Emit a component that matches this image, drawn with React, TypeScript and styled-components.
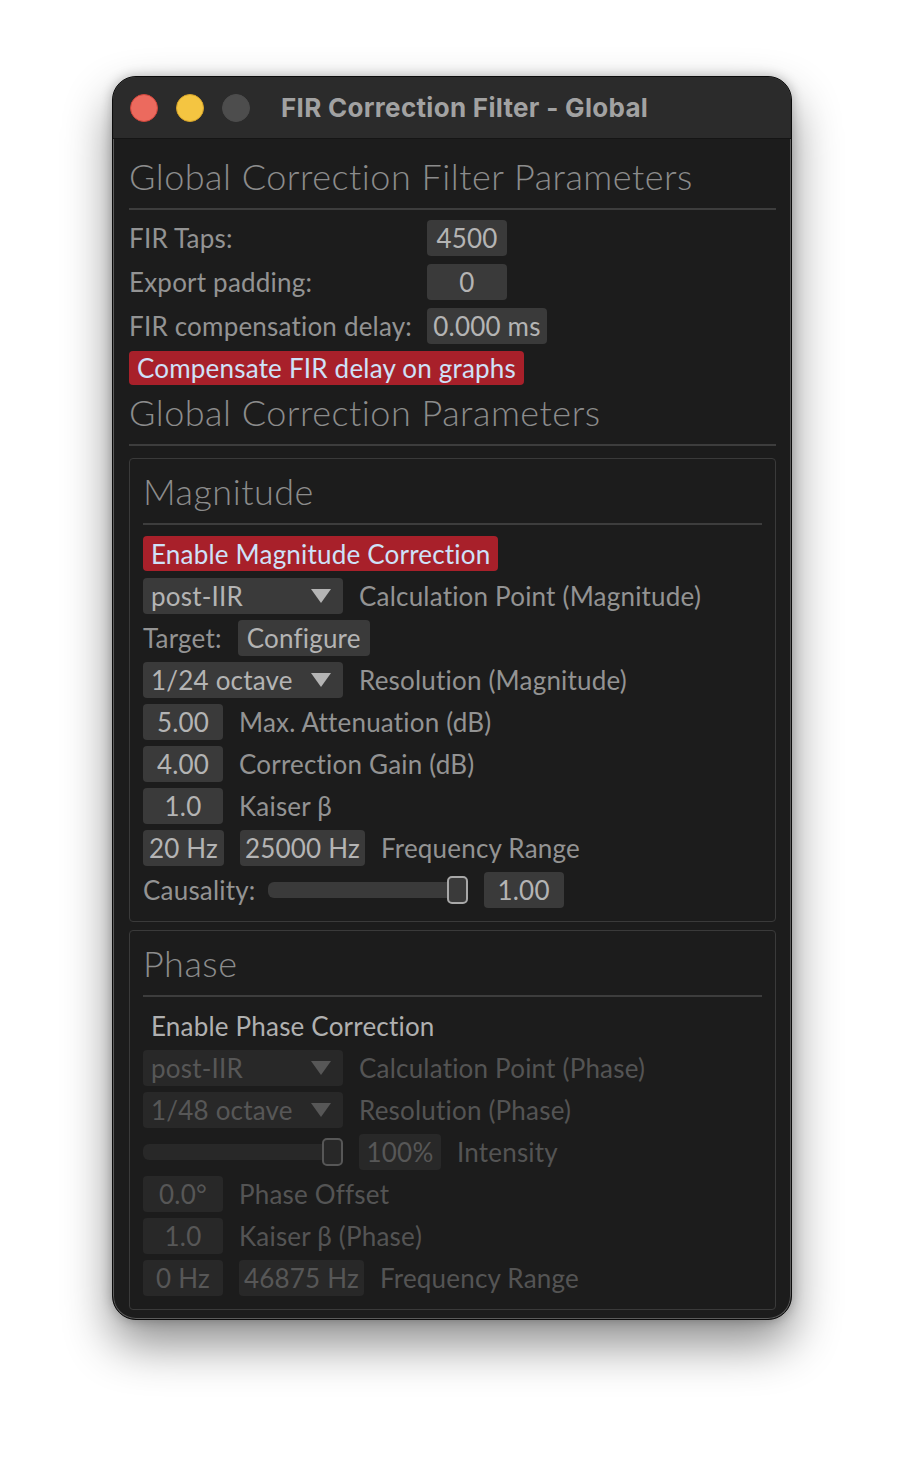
import React from "react";
import styled, { createGlobalStyle } from "styled-components";

const FONT = `"Lato", "Open Sans", "Noto Sans", sans-serif`;

const GlobalStyle = createGlobalStyle`
  html, body {
    margin: 0;
    padding: 0;
    background: #ffffff;
  }
  * {
    box-sizing: border-box;
  }
`;

const App = () => {
  return (
    <Page>
      <GlobalStyle />
      <Window>
        <TitleBar>
          <Light color="#ec6a5e" edge="#d0453b" />
          <Light color="#f4c541" edge="#d6a42a" />
          <Light color="#4d4d4d" edge="#4d4d4d" />
          <Title>FIR Correction Filter - Global</Title>
        </TitleBar>
        <Content>
          <Heading>Global Correction Filter Parameters</Heading>
          <Rule />
          <ParamGrid>
            <Label>FIR Taps:</Label>
            <Field width={80}>4500</Field>
            <Label>Export padding:</Label>
            <Field width={80}>0</Field>
            <Label>FIR compensation delay:</Label>
            <Field width={120}>0.000 ms</Field>
          </ParamGrid>
          <Toggle active>Compensate FIR delay on graphs</Toggle>
          <Heading spaced>Global Correction Parameters</Heading>
          <Rule />
          <Group>
            <Heading>Magnitude</Heading>
            <Rule />
            <Toggle active>Enable Magnitude Correction</Toggle>
            <Rows>
              <Row>
                <Select>
                  post-IIR
                  <Caret />
                </Select>
                <Label>Calculation Point (Magnitude)</Label>
              </Row>
              <Row>
                <Label>Target:</Label>
                <Button>Configure</Button>
              </Row>
              <Row>
                <Select>
                  1/24 octave
                  <Caret />
                </Select>
                <Label>Resolution (Magnitude)</Label>
              </Row>
              <Row>
                <Field width={80}>5.00</Field>
                <Label>Max. Attenuation (dB)</Label>
              </Row>
              <Row>
                <Field width={80}>4.00</Field>
                <Label>Correction Gain (dB)</Label>
              </Row>
              <Row>
                <Field width={80}>1.0</Field>
                <Label>Kaiser β</Label>
              </Row>
              <Row>
                <Field width={81}>20 Hz</Field>
                <Field width={125}>25000 Hz</Field>
                <Label>Frequency Range</Label>
              </Row>
              <Row gap={12}>
                <Label>Causality:</Label>
                <Slider width={200} trail={4}>
                  <Thumb />
                </Slider>
                <Field width={80}>1.00</Field>
              </Row>
            </Rows>
          </Group>
          <Group last>
            <Heading>Phase</Heading>
            <Rule />
            <Toggle>Enable Phase Correction</Toggle>
            <Rows>
              <Row>
                <Select disabled>
                  post-IIR
                  <Caret disabled />
                </Select>
                <Label disabled>Calculation Point (Phase)</Label>
              </Row>
              <Row>
                <Select disabled>
                  1/48 octave
                  <Caret disabled />
                </Select>
                <Label disabled>Resolution (Phase)</Label>
              </Row>
              <Row>
                <Slider width={200} disabled>
                  <Thumb disabled />
                </Slider>
                <Field width={82} disabled>
                  100%
                </Field>
                <Label disabled>Intensity</Label>
              </Row>
              <Row>
                <Field width={80} disabled>
                  0.0°
                </Field>
                <Label disabled>Phase Offset</Label>
              </Row>
              <Row>
                <Field width={80} disabled>
                  1.0
                </Field>
                <Label disabled>Kaiser β (Phase)</Label>
              </Row>
              <Row>
                <Field width={80} disabled>
                  0 Hz
                </Field>
                <Field width={125} disabled>
                  46875 Hz
                </Field>
                <Label disabled>Frequency Range</Label>
              </Row>
            </Rows>
          </Group>
        </Content>
      </Window>
    </Page>
  );
};

export default App;

const Page = styled.div`
  width: 904px;
  height: 1468px;
  padding: 76px 0 0 112px;
  background: #ffffff;
  font-family: ${FONT};
`;

const Window = styled.div`
  width: 680px;
  height: 1244px;
  border-radius: 24px;
  overflow: hidden;
  background: #1c1c1c;
  border: 1px solid #0c0c0c;
  box-shadow: inset 0 0 0 1px #5c5c5c, 0 24px 48px rgba(0, 0, 0, 0.45),
    0 0 12px rgba(0, 0, 0, 0.25);
  display: flex;
  flex-direction: column;
`;

const TitleBar = styled.div`
  height: 62px;
  flex-shrink: 0;
  background: #2b2b2b;
  display: flex;
  align-items: center;
  padding-left: 17px;
  gap: 18px;
  border-bottom: 1px solid #151515;
`;

const Light = styled.span<{ color: string; edge: string }>`
  width: 28px;
  height: 28px;
  border-radius: 50%;
  background: ${(p) => p.color};
  border: 1px solid ${(p) => p.edge};
`;

const Title = styled.div`
  margin-left: 13px;
  font-family: "Inter", "Liberation Sans", Arial, sans-serif;
  font-weight: 700;
  font-size: 26px;
  color: #a2a2a2;
  letter-spacing: 0.3px;
`;

const Content = styled.div`
  flex: 1;
  padding: 15px 15px 0 16px;
  display: flex;
  flex-direction: column;
`;

const Heading = styled.div<{ spaced?: boolean }>`
  height: 44px;
  margin-top: ${(p) => (p.spaced ? "5px" : "0")};
  line-height: 44px;
  font-size: 36px;
  font-weight: 300;
  letter-spacing: 0.5px;
  color: #8c8c8c;
  white-space: nowrap;
`;

const Rule = styled.div`
  height: 2px;
  margin-top: 10px;
  background: #3d3d3d;
`;

const ParamGrid = styled.div`
  margin-top: 10px;
  display: grid;
  grid-template-columns: 298px auto;
  row-gap: 8px;
  align-items: center;
  justify-items: start;
`;

const Label = styled.span<{ disabled?: boolean }>`
  font-size: 26px;
  letter-spacing: 0.2px;
  color: ${(p) => (p.disabled ? "#545454" : "#939393")};
  white-space: nowrap;
`;

const Field = styled.div<{ width: number; disabled?: boolean }>`
  width: ${(p) => p.width}px;
  height: 36px;
  border-radius: 4px;
  background: ${(p) => (p.disabled ? "#282828" : "#3a3a3a")};
  color: ${(p) => (p.disabled ? "#575757" : "#b4b4b4")};
  font-size: 26px;
  letter-spacing: 0.2px;
  display: flex;
  align-items: center;
  justify-content: center;
  white-space: nowrap;
`;

const Toggle = styled.div<{ active?: boolean }>`
  align-self: flex-start;
  margin-top: 7px;
  height: 34px;
  padding: 0 8px;
  border-radius: 4px;
  background: ${(p) => (p.active ? "#a8202a" : "transparent")};
  color: ${(p) => (p.active ? "#cfe1f8" : "#b0b0b0")};
  font-size: 26px;
  letter-spacing: 0.2px;
  display: flex;
  align-items: center;
  white-space: nowrap;
`;

const Group = styled.div<{ last?: boolean }>`
  margin-top: ${(p) => (p.last ? "8px" : "12px")};
  border: 1px solid #3a3a3a;
  border-radius: 4px;
  padding: 10px 13px 13px 13px;
  display: flex;
  flex-direction: column;

  ${Toggle} {
    margin-top: 11px;
    height: 35px;
  }
`;

const Rows = styled.div`
  margin-top: 7px;
  display: flex;
  flex-direction: column;
  gap: 6px;
`;

const Row = styled.div<{ gap?: number }>`
  height: 36px;
  display: flex;
  align-items: center;
  gap: ${(p) => p.gap ?? 16}px;
`;

const Select = styled.div<{ disabled?: boolean }>`
  width: 200px;
  height: 36px;
  border-radius: 4px;
  padding: 0 12px 0 8px;
  background: ${(p) => (p.disabled ? "#282828" : "#3a3a3a")};
  color: ${(p) => (p.disabled ? "#575757" : "#b4b4b4")};
  font-size: 26px;
  letter-spacing: 0.2px;
  display: flex;
  align-items: center;
  justify-content: space-between;
  white-space: nowrap;
`;

const Caret = styled.span<{ disabled?: boolean }>`
  width: 0;
  height: 0;
  border-left: 10px solid transparent;
  border-right: 10px solid transparent;
  border-top: 14px solid ${(p) => (p.disabled ? "#575757" : "#b4b4b4")};
`;

const Button = styled.div`
  height: 36px;
  padding: 0 9px;
  border-radius: 4px;
  background: #3a3a3a;
  color: #b4b4b4;
  font-size: 26px;
  letter-spacing: 0.2px;
  display: flex;
  align-items: center;
`;

const Slider = styled.div<{ width: number; trail?: number; disabled?: boolean }>`
  position: relative;
  width: ${(p) => p.width}px;
  margin-right: ${(p) => p.trail ?? 0}px;
  height: 16px;
  border-radius: 6px;
  background: ${(p) => (p.disabled ? "#282828" : "#3a3a3a")};
`;

const Thumb = styled.span<{ disabled?: boolean }>`
  position: absolute;
  right: 0;
  top: -6px;
  width: 21px;
  height: 28px;
  border-radius: 5px;
  border: 2px solid ${(p) => (p.disabled ? "#575757" : "#a8a8a8")};
  background: ${(p) => (p.disabled ? "#282828" : "#3a3a3a")};
`;
